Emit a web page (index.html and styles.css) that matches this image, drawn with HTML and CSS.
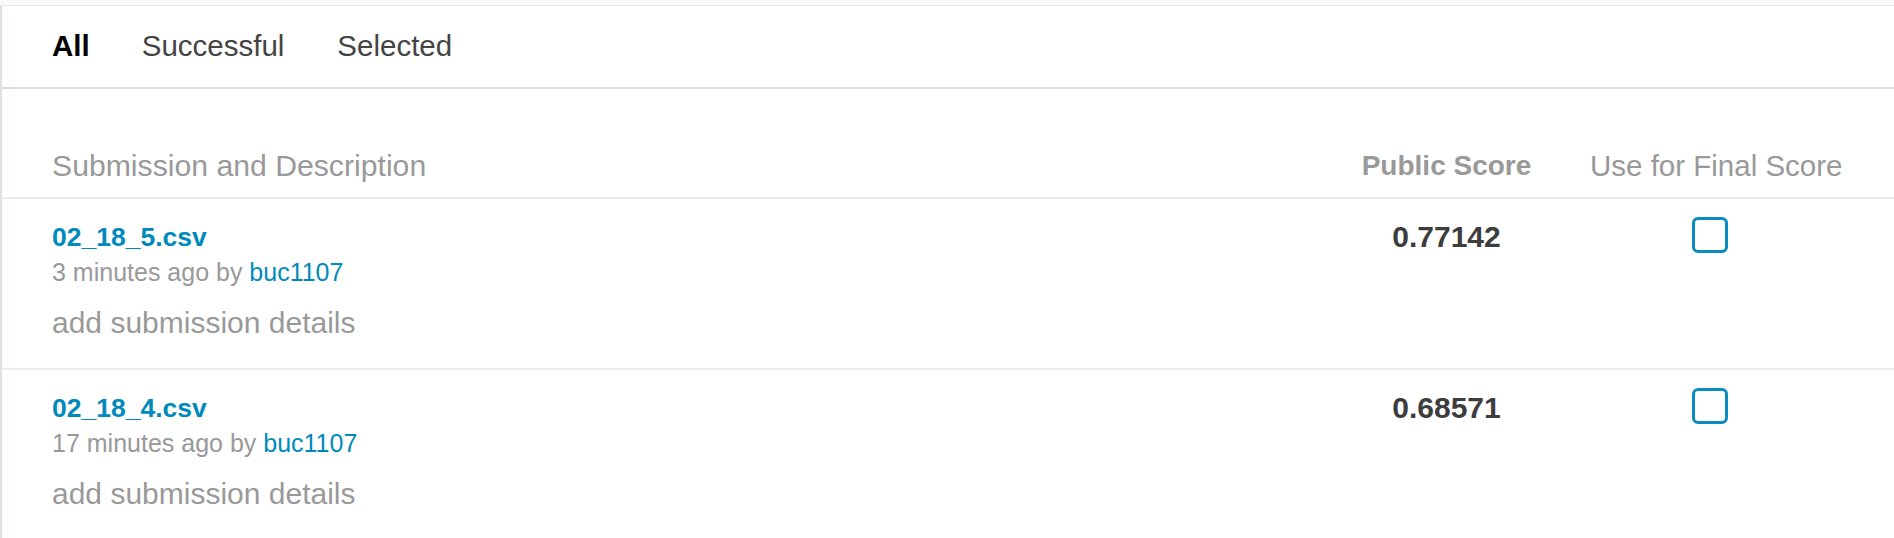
FILE: index.html
```html
<!DOCTYPE html>
<html lang="en">
<head>
<meta charset="utf-8">
<title>Submissions</title>
<link rel="stylesheet" href="styles.css">
</head>
<body>
<div class="topstrip"></div>
<div class="panel">
  <nav class="tabs">
    <a class="tab tab-active">All</a>
    <a class="tab">Successful</a>
    <a class="tab tab-selected">Selected</a>
  </nav>
  <div class="table">
    <div class="thead">
      <div class="th th-desc">Submission and Description</div>
      <div class="th th-score">Public Score</div>
      <div class="th th-final">Use for Final Score</div>
    </div>
    <div class="row">
      <div class="cell cell-desc">
        <a class="title">02_18_5.csv</a>
        <div class="meta">3 minutes ago by <a class="user">buc1107</a></div>
        <div class="details">add submission details</div>
      </div>
      <div class="cell cell-score">0.77142</div>
      <div class="cell cell-final"><span class="checkbox"></span></div>
    </div>
    <div class="row">
      <div class="cell cell-desc">
        <a class="title">02_18_4.csv</a>
        <div class="meta">17 minutes ago by <a class="user">buc1107</a></div>
        <div class="details">add submission details</div>
      </div>
      <div class="cell cell-score">0.68571</div>
      <div class="cell cell-final"><span class="checkbox"></span></div>
    </div>
  </div>
</div>
</body>
</html>
```

FILE: styles.css
```css
html, body {
  margin: 0;
  padding: 0;
  background: #ffffff;
}

body {
  font-family: "Liberation Sans", Arial, sans-serif;
  color: #444444;
  overflow: hidden;
  height: 538px;
}

a {
  text-decoration: none;
  cursor: pointer;
}

.topstrip {
  height: 5px;
  background: #fafafa;
  border-bottom: 1px solid #e9e9e9;
}

.panel {
  border-left: 2px solid #dde1e5;
  height: 532px;
  overflow: hidden;
}

.tabs {
  display: flex;
  gap: 52px;
  height: 81px;
  line-height: 79px;
  padding-left: 50px;
  border-bottom: 2px solid #dcdcdc;
  font-size: 29.5px;
}

.tab {
  color: #444444;
}

.tab-selected {
  margin-left: 1px;
}

.tab-active {
  color: #000000;
  font-weight: bold;
}

.thead,
.row {
  display: grid;
  grid-template-columns: 1fr 171px 252px;
  column-gap: 58px;
  padding: 0 52px 0 50px;
}

.thead {
  padding-top: 57px;
  padding-bottom: 11px;
  border-bottom: 2px solid #ececec;
}

.th {
  font-size: 29.5px;
  line-height: 40px;
  color: #999999;
  white-space: nowrap;
}

.th-desc {
  font-size: 30.2px;
}

.th-score {
  font-weight: bold;
  font-size: 28px;
  text-align: center;
}

.th-final {
  text-align: center;
}

.row {
  height: 169px;
  border-bottom: 2px solid #ececec;
}

.cell-desc {
  padding-top: 22px;
}

.title {
  display: block;
  font-size: 26.5px;
  line-height: 32px;
  font-weight: bold;
  color: #008abc;
}

.meta {
  margin-top: 2px;
  font-size: 25px;
  line-height: 34px;
  color: #999999;
}

.user {
  color: #008abc;
}

.details {
  margin-top: 14px;
  font-size: 30px;
  line-height: 40px;
  color: #999999;
}

.cell-score {
  padding-top: 22px;
  font-size: 30px;
  line-height: 32px;
  font-weight: bold;
  color: #3d3d3d;
  text-align: center;
}

.cell-final {
  display: flex;
  justify-content: center;
  align-items: flex-start;
  padding-top: 18px;
  padding-right: 12px;
}

.checkbox {
  display: block;
  width: 36px;
  height: 36px;
  box-sizing: border-box;
  border: 3px solid #0a8cc0;
  border-radius: 6px;
  background: #ffffff;
}
```
